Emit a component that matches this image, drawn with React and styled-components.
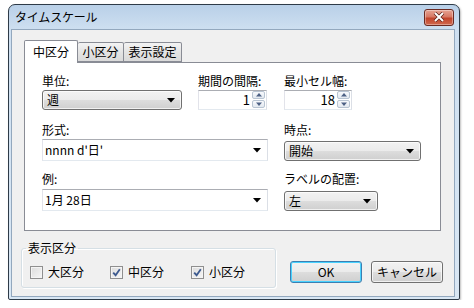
import styled, { createGlobalStyle } from 'styled-components';

const Global = createGlobalStyle`
    body{
        margin: 0;
        background: #fff;
        font-family: "Noto Sans CJK JP", "Noto Sans", sans-serif;
        font-size: 12px;
        color: #000;
    }
`;

const Page = styled.div`
    padding: 4px 0 0 8px;
`;

const Window = styled.div`
    width: 452px;
    height: 296px;
    box-sizing: border-box;
    border: 1px solid #2e3b48;
    border-radius: 7px 7px 2px 2px;
    background: linear-gradient(#b9d0e8, #cfe0f1 26px, #d9e7f4);
    display: flex;
    flex-direction: column;
    box-shadow: 1px 1px 2px rgba(0,0,0,.25);
`;

const TitleBar = styled.div`
    height: 24px;
    flex: none;
    display: flex;
    align-items: center;
    padding: 0 5px 0 6px;
    line-height: 16px;
`;

const Title = styled.span`
    flex: 1;
    letter-spacing: -0.2px;
`;

const CloseButton = styled.div`
    width: 30px;
    height: 17px;
    box-sizing: border-box;
    border: 1px solid #6b2a22;
    border-radius: 3px;
    background: linear-gradient(#e6a393, #d77864 45%, #c2442c 55%, #d0694f);
    display: flex;
    align-items: center;
    justify-content: center;
    box-shadow: inset 0 0 0 1px rgba(255,255,255,.35);
`;

const Body = styled.div`
    flex: 1;
    margin: 0 4px 2px 2px;
    border: 1px solid #93a8be;
    background: #f0f0f0;
    padding: 10px 0 0 9px;
    display: flex;
    flex-direction: column;
`;

const Tabs = styled.div`
    display: flex;
    align-items: flex-end;
    height: 22px;
    margin-left: 3px;
    position: relative;
    z-index: 1;
`;

const Tab = styled.div`
    box-sizing: border-box;
    height: ${p => p.$active ? '23px' : '20px'};
    margin-bottom: ${p => p.$active ? '-1px' : '0'};
    padding: 0 ${p => p.$active ? '8px' : '4px'};
    border: 1px solid #898c95;
    border-bottom: ${p => p.$active ? 'none' : '1px solid #898c95'};
    border-left: ${p => p.$first || p.$active ? '1px solid #898c95' : 'none'};
    border-radius: 2px 2px 0 0;
    background: ${p => p.$active ? '#fff' : 'linear-gradient(#f3f3f3, #e4e4e4 50%, #dadada)'};
    display: flex;
    align-items: center;
    line-height: 16px;
    min-width: ${p => p.$w}px;
    justify-content: center;
`;

const Panel = styled.div`
    margin-left: 3px;
    width: 417px;
    height: 169px;
    box-sizing: border-box;
    border: 1px solid #898c95;
    background: #fff;
    padding: 10px 0 0 17px;
    display: grid;
    grid-template-columns: 156px 86px 1fr;
    grid-template-rows: 49px 49px 50px;
`;

const Field = styled.div`
    display: flex;
    flex-direction: column;
    align-items: flex-start;
    grid-column: ${p => p.$span ? 'span 2' : 'auto'};
`;

const Label = styled.label`
    line-height: 16px;
    height: 16px;
`;

const DropDown = styled.div`
    margin-top: ${p => p.$top}px;
    width: ${p => p.$w}px;
    height: 20px;
    box-sizing: border-box;
    border: 1px solid #707070;
    border-radius: 3px;
    background: linear-gradient(#f2f2f2, #ebebeb 50%, #dddddd 51%, #cfcfcf);
    box-shadow: inset 0 0 0 1px rgba(255,255,255,.7);
    display: flex;
    align-items: center;
    padding: 0 6px 0 4px;
    line-height: 16px;
    span{ flex: 1; }
`;

const Combo = styled.div`
    margin-top: ${p => p.$top}px;
    width: ${p => p.$w}px;
    height: 22px;
    box-sizing: border-box;
    border: 1px solid #abadb3;
    border-color: #abadb3 #dbdfe6 #e3e9ef #e2e3ea;
    background: #fff;
    display: flex;
    align-items: center;
    padding: 0 6px 0 2px;
    line-height: 16px;
    span{ flex: 1; }
`;

const Spin = styled.div`
    margin-top: ${p => p.$top}px;
    width: ${p => p.$w}px;
    height: 20px;
    box-sizing: border-box;
    border: 1px solid #abadb3;
    border-color: #abadb3 #dbdfe6 #e3e9ef #e2e3ea;
    background: #fff;
    display: flex;
    align-items: center;
    padding: 0 1px 0 2px;
    span{
        flex: 1;
        text-align: right;
        padding-right: 2px;
        line-height: 16px;
        font-size: 13px;
    }
`;

const SpinButtons = styled.div`
    display: flex;
    flex-direction: column;
    gap: 0;
    width: 13px;
`;

const SpinButton = styled.div`
    height: 8px;
    box-sizing: border-box;
    border: 1px solid #b8c4d2;
    border-radius: 2px;
    background: linear-gradient(#f7f9fc, #e3e9f0);
    display: flex;
    align-items: center;
    justify-content: center;
    margin-bottom: 1px;
`;

const Bottom = styled.div`
    display: flex;
    align-items: flex-start;
    margin-top: 10px;
`;

const GroupBox = styled.fieldset`
    margin: 0;
    width: 255px;
    height: 47px;
    box-sizing: border-box;
    border: 1px solid #d5dfe5;
    border-radius: 3px;
    box-shadow: inset 1px 1px 0 #fff, 1px 1px 0 #fff;
    padding: 10px 0 0 4px;

    legend{
        padding: 0 2px;
        line-height: 14px;
    }
`;

const Checks = styled.div`
    display: flex;
    align-items: center;
    padding-left: 4px;
    height: 14px;
`;

const Check = styled.div`
    display: flex;
    align-items: center;
    width: ${p => p.$w}px;
    line-height: 14px;
`;

const Box = styled.span`
    width: 13px;
    height: 13px;
    box-sizing: border-box;
    border: 1px solid #8f8f8f;
    background: linear-gradient(135deg, #dcdcdc, #f6f6f6);
    box-shadow: inset 0 0 0 1px #f4f4f4;
    margin-right: 5px;
    display: flex;
    align-items: center;
    justify-content: center;
    flex: none;
`;

const Button = styled.div`
    width: 72px;
    height: 22px;
    box-sizing: border-box;
    margin: 20px 0 0 ${p => p.$ml}px;
    border: 1px solid ${p => p.$default ? '#3c7fb1' : '#707070'};
    border-radius: 3px;
    background: linear-gradient(#f2f2f2, #ebebeb 50%, #dddddd 51%, #cfcfcf);
    box-shadow: inset 0 0 0 1px ${p => p.$default ? '#48d2ff' : 'rgba(255,255,255,.7)'};
    display: flex;
    align-items: center;
    justify-content: center;
    line-height: 16px;
`;

const Arrow = () => (
    <svg width="8" height="5" viewBox="0 0 8 5">
        <polygon points="0,0 8,0 4,4.5" fill="#000" />
    </svg>
);

const SmallArrow = ({ up }) => (
    <svg width="6" height="4" viewBox="0 0 6 4">
        <polygon points={up ? '0,3.5 6,3.5 3,0' : '0,0.5 6,0.5 3,4'} fill="#4d6185" />
    </svg>
);

const CheckMark = () => (
    <svg width="9" height="9" viewBox="0 0 9 9">
        <path d="M1.2 4.6 L3.6 7.2 L7.8 1.2" stroke="#3d5a8f" strokeWidth="1.8" fill="none" />
    </svg>
);

const SpinBox = ({ value, w, top }) => (
    <Spin $w={w} $top={top}>
        <span>{value}</span>
        <SpinButtons>
            <SpinButton><SmallArrow up /></SpinButton>
            <SpinButton><SmallArrow /></SpinButton>
        </SpinButtons>
    </Spin>
);

const App = () => {
    return (
        <Page>
            <Global />
            <Window>
                <TitleBar>
                    <Title>タイムスケール</Title>
                    <CloseButton>
                        <svg width="12" height="10" viewBox="0 0 12 10">
                            <path d="M2 1 L10 9 M10 1 L2 9" stroke="#5a1f17" strokeWidth="3.4" />
                            <path d="M2 1 L10 9 M10 1 L2 9" stroke="#fff" strokeWidth="2" />
                        </svg>
                    </CloseButton>
                </TitleBar>

                <Body>
                    <Tabs>
                        <Tab $active $first $w={50}>中区分</Tab>
                        <Tab $w={46}>小区分</Tab>
                        <Tab $w={58}>表示設定</Tab>
                    </Tabs>

                    <Panel>
                        <Field>
                            <Label>単位:</Label>
                            <DropDown $w={140} $top={1}><span>週</span><Arrow /></DropDown>
                        </Field>
                        <Field>
                            <Label>期間の間隔:</Label>
                            <SpinBox value="1" w={69} top={1} />
                        </Field>
                        <Field>
                            <Label>最小セル幅:</Label>
                            <SpinBox value="18" w={68} top={1} />
                        </Field>

                        <Field $span>
                            <Label>形式:</Label>
                            <Combo $w={226} $top={1}><span>nnnn d'日'</span><Arrow /></Combo>
                        </Field>
                        <Field>
                            <Label>時点:</Label>
                            <DropDown $w={137} $top={3}><span>開始</span><Arrow /></DropDown>
                        </Field>

                        <Field $span>
                            <Label>例:</Label>
                            <Combo $w={226} $top={2}><span>1月 28日</span><Arrow /></Combo>
                        </Field>
                        <Field>
                            <Label>ラベルの配置:</Label>
                            <DropDown $w={94} $top={4}><span>左</span><Arrow /></DropDown>
                        </Field>
                    </Panel>

                    <Bottom>
                        <GroupBox>
                            <legend>表示区分</legend>
                            <Checks>
                                <Check $w={80}><Box />大区分</Check>
                                <Check $w={81}><Box><CheckMark /></Box>中区分</Check>
                                <Check $w={80}><Box><CheckMark /></Box>小区分</Check>
                            </Checks>
                        </GroupBox>
                        <Button $default $ml={14}>OK</Button>
                        <Button $ml={9}>キャンセル</Button>
                    </Bottom>
                </Body>
            </Window>
        </Page>
    )
}

export default App
